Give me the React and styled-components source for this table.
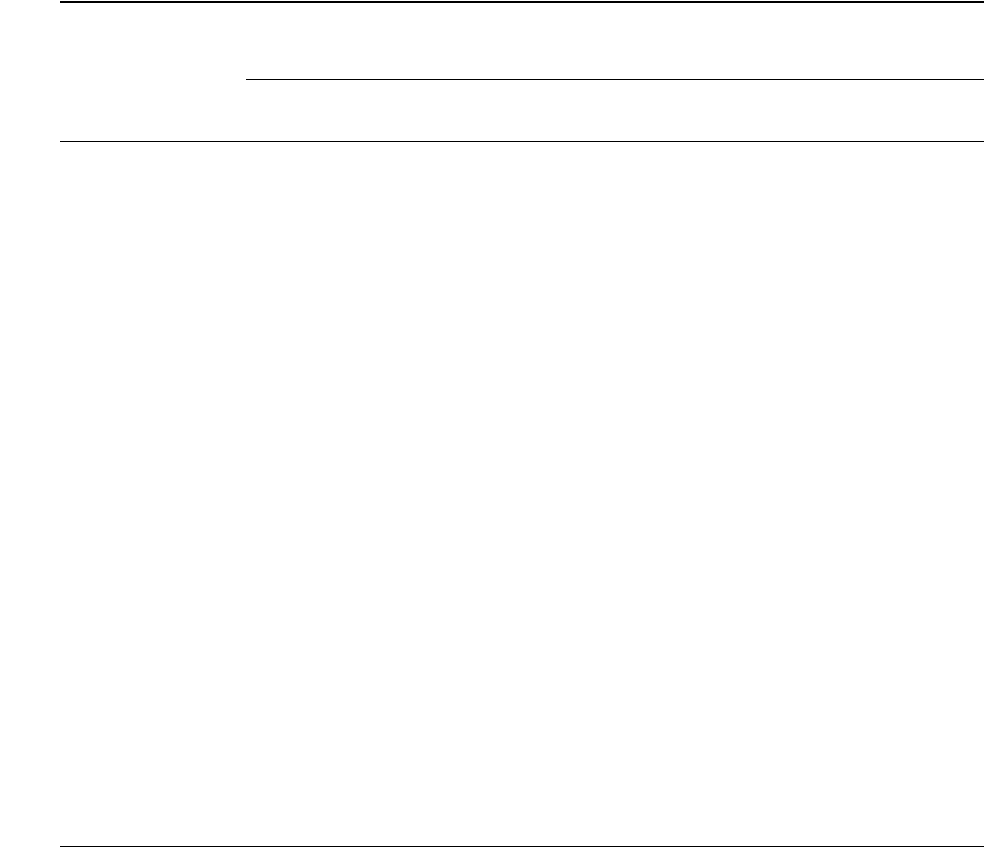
import React from 'react';
import styled, { createGlobalStyle } from 'styled-components';

const GlobalStyle = createGlobalStyle`
    html, body {
        margin: 0;
        padding: 0;
        background: #ffffff;
        font-family: "Liberation Sans", Arial, sans-serif;
    }
`;

const Frame = styled.div`
    margin: 1px 0 0 60px;
    border-top: 2px solid #000000;
`;

const Header = styled.header`
    display: grid;
    grid-template-columns: 186px 1fr;
    height: 138px;
    border-bottom: 1px solid #000000;
`;

const SideSlot = styled.div``;

const HeaderMain = styled.div`
    display: flex;
    flex-direction: column;
`;

const HeaderTop = styled.div`
    height: 76px;
    border-bottom: 1px solid #000000;
`;

const Content = styled.main`
    height: 704px;
    border-bottom: 1px solid #000000;
`;

const App = () => {
    return (
        <>
            <GlobalStyle />
            <Frame>
                <Header>
                    <SideSlot />
                    <HeaderMain>
                        <HeaderTop />
                    </HeaderMain>
                </Header>
                <Content />
            </Frame>
        </>
    );
};

export default App;
